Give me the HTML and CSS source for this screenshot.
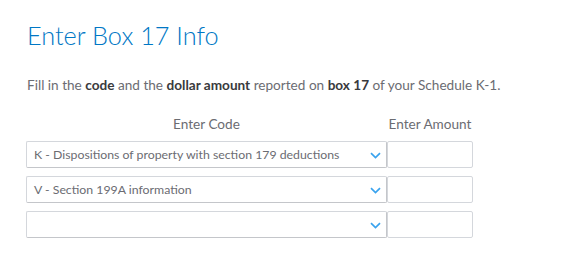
FILE: index.html
```html
<!DOCTYPE html>
<html>
<head>
<meta charset="utf-8">
<link rel="stylesheet" href="styles.css">
</head>
<body>
<main class="page">
  <h1 class="title">Enter Box 17 Info</h1>
  <p class="intro">Fill in the <b>code</b> and the <b>dollar amount</b> reported on <b>box 17</b> of your Schedule K-1.</p>
  <div class="table">
    <div class="head">Enter Code</div>
    <div class="head">Enter Amount</div>

    <div class="select"><span class="value">K - Dispositions of property with section 179 deductions</span><svg class="chev" width="11" height="7" viewBox="0 0 11 7"><path d="M1 1.2l4.5 4.3L10 1.2" fill="none" stroke="#3aa3ee" stroke-width="1.7"/></svg></div>
    <div class="amount"></div>

    <div class="select"><span class="value">V - Section 199A information</span><svg class="chev" width="11" height="7" viewBox="0 0 11 7"><path d="M1 1.2l4.5 4.3L10 1.2" fill="none" stroke="#3aa3ee" stroke-width="1.7"/></svg></div>
    <div class="amount"></div>

    <div class="select"><span class="value"></span><svg class="chev" width="11" height="7" viewBox="0 0 11 7"><path d="M1 1.2l4.5 4.3L10 1.2" fill="none" stroke="#3aa3ee" stroke-width="1.7"/></svg></div>
    <div class="amount"></div>
  </div>
</main>
</body>
</html>
```

FILE: styles.css
```css
html, body {
  margin: 0;
  padding: 0;
  background: #ffffff;
}
.page {
  padding: 19px 0 0 26px;
  font-family: Lato, "Open Sans", sans-serif;
  color: #6b6c72;
}
.title {
  margin: 0;
  font-size: 25.3px;
  line-height: 32px;
  font-weight: 300;
  color: #0077c5;
  padding-left: 1px;
}
.intro {
  margin: 25px 0 0 0;
  font-size: 13.6px;
  line-height: 18px;
  padding-left: 1px;
}
.intro b {
  color: #393a3d;
  font-weight: 700;
}
.table {
  display: grid;
  grid-template-columns: 361px 86px;
  grid-template-rows: 17px 27px 27px 27px;
  row-gap: 8px;
  margin-top: 22px;
}
.head {
  font-size: 13.6px;
  text-align: center;
  line-height: 16px;
  color: #6b6c72;
}
.select {
  box-sizing: border-box;
  border: 1px solid #d4d7dc;
  border-right-color: #c4c6ca;
  border-bottom-color: #c4c6ca;
  border-radius: 2px;
  display: flex;
  align-items: center;
  padding: 0 5px 0 7px;
  font-size: 12.3px;
  color: #6b6c72;
}
.value {
  flex: 1;
  white-space: nowrap;
}
.chev {
  display: block;
  margin-top: 1px;
}
.amount {
  box-sizing: border-box;
  border: 1px solid #d4d7dc;
  border-radius: 2px;
}
```
